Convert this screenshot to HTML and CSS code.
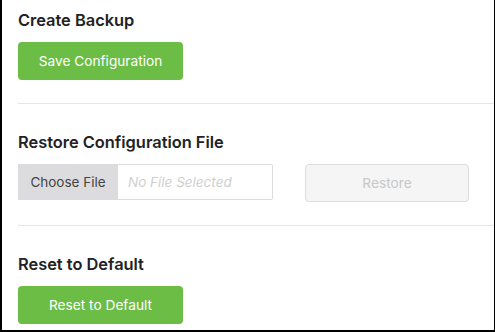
FILE: index.html
```html
<!DOCTYPE html>
<html>
<head>
<meta charset="utf-8">
<link rel="stylesheet" href="styles.css">
</head>
<body>
<div class="frame">
  <section class="section first">
    <h2 class="title">Create Backup</h2>
    <button class="btn btn-green">Save Configuration</button>
  </section>
  <section class="section">
    <h2 class="title">Restore Configuration File</h2>
    <div class="row">
      <div class="file">
        <span class="file-btn">Choose File</span>
        <span class="file-name">No File Selected</span>
      </div>
      <button class="btn btn-disabled">Restore</button>
    </div>
  </section>
  <section class="section last">
    <h2 class="title">Reset to Default</h2>
    <button class="btn btn-green">Reset to Default</button>
  </section>
</div>
</body>
</html>
```
FILE: styles.css
```css
html, body {
  margin: 0;
  padding: 0;
  background: #fff;
}
.frame {
  box-sizing: border-box;
  width: 495px;
  height: 332px;
  border-left: 2px solid #000;
  border-right: 1px solid #000;
  border-bottom: 2px solid #000;
  padding-left: 16px;
  font-family: Inter, "Liberation Sans", sans-serif;
  overflow: hidden;
}
.section {
  padding: 27px 0 23px;
  border-bottom: 1px solid #e6e6e6;
}
.section.first {
  padding-top: 9px;
}
.section.last {
  border-bottom: none;
  padding-bottom: 0;
}
.title {
  margin: 0 0 11px;
  font-size: 16.4px;
  line-height: 22px;
  font-weight: 600;
  color: #222;
}
.btn {
  box-sizing: border-box;
  display: block;
  width: 165px;
  height: 38px;
  border-radius: 4px;
  font-family: inherit;
  font-size: 13.7px;
  padding: 0;
  cursor: pointer;
}
.btn-green {
  background: #6bbd46;
  border: none;
  color: #fff;
}
.row {
  display: flex;
  align-items: flex-start;
  gap: 32px;
}
.file {
  box-sizing: border-box;
  display: flex;
  width: 255px;
  height: 36px;
  border: 1px solid #dcdcdc;
  border-left: none;
  border-radius: 0 2px 2px 0;
  font-size: 13.5px;
}
.file-btn {
  display: flex;
  align-items: center;
  justify-content: center;
  width: 100px;
  margin-top: -1px;
  margin-bottom: -1px;
  background: #dcdcdf;
  color: #444;
}
.file-name {
  display: flex;
  align-items: center;
  padding-left: 10px;
  color: #cfcfcf;
  font-style: italic;
}
.btn-disabled {
  width: 164px;
  background: #f5f5f5;
  border: 1px solid #dddddd;
  color: #c8c8c8;
}
```
